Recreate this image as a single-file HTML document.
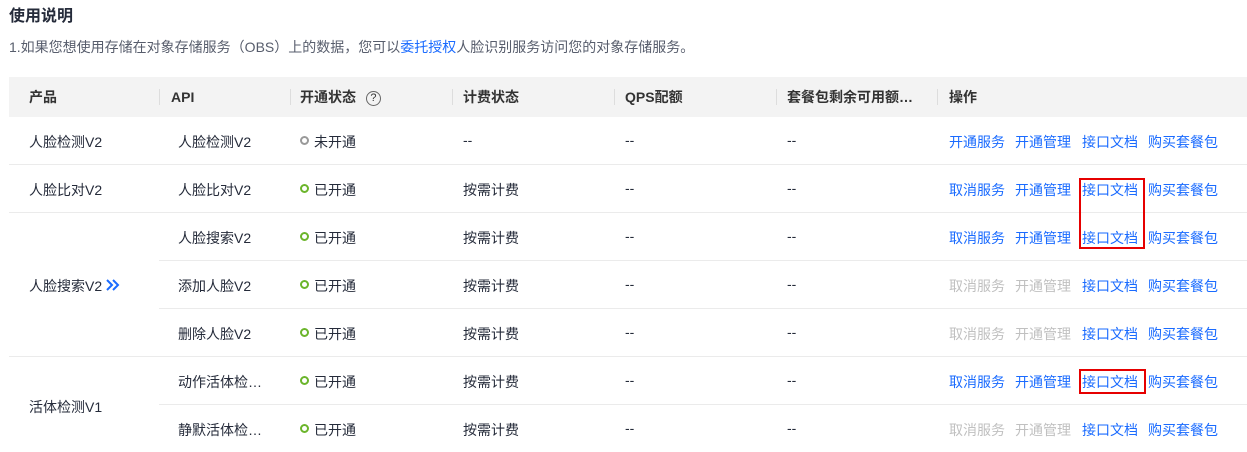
<!DOCTYPE html><html><head><meta charset="utf-8"><style>
body{margin:0;width:1247px;height:452px;background:#fff;font-family:"Liberation Sans","Noto Sans CJK SC",sans-serif;font-size:14px;line-height:20px;color:#252b3a;position:relative;overflow:hidden}
.a{position:absolute;white-space:nowrap;line-height:20px}
.r .a{margin-top:1px}
.h{font-weight:bold;color:#333}
.l{color:#1a6bff}.d{color:#c0c0c0}
.line{position:absolute;height:1px;background:#ebebeb}
.sep{position:absolute;width:1px;height:16px;top:89px;background:#ddd}
.dot{display:inline-block;width:5px;height:5px;border:2px solid #6bb52b;border-radius:50%;margin-right:5px;vertical-align:2px}
.g{border-color:#999}
.rb{position:absolute;border:2px solid #e60000}
.ops{display:flex;gap:10px}
.ops span:nth-child(3){margin-left:1px}
</style></head><body>
<div class="a" style="left:9px;top:7px;font-size:16px;font-weight:bold;color:#252b3a">使用说明</div>
<div class="a" style="left:9px;top:37px;font-size:14px;color:#575d6c">1.如果您想使用存储在对象存储服务（OBS）上的数据，您可以<span class="l">委托授权</span>人脸识别服务访问您的对象存储服务。</div>
<div style="position:absolute;left:9px;top:77px;width:1238px;height:40px;background:#f3f3f3"></div>
<div class="sep" style="left:159px"></div><div class="sep" style="left:290px"></div><div class="sep" style="left:452px"></div><div class="sep" style="left:614px"></div><div class="sep" style="left:776px"></div><div class="sep" style="left:937px"></div>
<div class="a h" style="left:29px;top:87px">产品</div>
<div class="a h" style="left:171px;top:87px">API</div>
<div class="a h" style="left:300px;top:87px">开通状态 <span style="display:inline-block;width:13px;height:13px;border:1px solid #666;border-radius:50%;font-size:11px;line-height:13px;text-align:center;font-weight:normal;margin-left:6px;vertical-align:1px">?</span></div>
<div class="a h" style="left:463px;top:87px">计费状态</div>
<div class="a h" style="left:625px;top:87px">QPS配额</div>
<div class="a h" style="left:787px;top:87px">套餐包剩余可用额…</div>
<div class="a h" style="left:949px;top:87px">操作</div>
<div class="line" style="left:9px;width:1238px;top:164px"></div>
<div class="line" style="left:9px;width:1238px;top:212px"></div>
<div class="line" style="left:159px;width:1088px;top:260px"></div>
<div class="line" style="left:159px;width:1088px;top:308px"></div>
<div class="line" style="left:9px;width:1238px;top:356px"></div>
<div class="line" style="left:159px;width:1088px;top:404px"></div>
<div class="r">
<div class="a" style="left:29px;top:131px">人脸检测V2</div>
<div class="a" style="left:29px;top:179px">人脸比对V2</div>
<div class="a" style="left:29px;top:275px">人脸搜索V2</div>
<div class="a" style="left:29px;top:396px">活体检测V1</div>
<div class="a" style="left:178px;top:131px">人脸检测V2</div>
<div class="a" style="left:178px;top:179px">人脸比对V2</div>
<div class="a" style="left:178px;top:227px">人脸搜索V2</div>
<div class="a" style="left:178px;top:275px">添加人脸V2</div>
<div class="a" style="left:178px;top:323px">删除人脸V2</div>
<div class="a" style="left:178px;top:371px">动作活体检…</div>
<div class="a" style="left:178px;top:419px">静默活体检…</div>
<div class="a" style="left:300px;top:131px"><span class="dot g"></span>未开通</div>
<div class="a" style="left:300px;top:179px"><span class="dot"></span>已开通</div>
<div class="a" style="left:300px;top:227px"><span class="dot"></span>已开通</div>
<div class="a" style="left:300px;top:275px"><span class="dot"></span>已开通</div>
<div class="a" style="left:300px;top:323px"><span class="dot"></span>已开通</div>
<div class="a" style="left:300px;top:371px"><span class="dot"></span>已开通</div>
<div class="a" style="left:300px;top:419px"><span class="dot"></span>已开通</div>
<div class="a" style="left:463px;top:129px">--</div>
<div class="a" style="left:463px;top:179px">按需计费</div><div class="a" style="left:463px;top:227px">按需计费</div><div class="a" style="left:463px;top:275px">按需计费</div><div class="a" style="left:463px;top:323px">按需计费</div><div class="a" style="left:463px;top:371px">按需计费</div><div class="a" style="left:463px;top:419px">按需计费</div>
<div class="a" style="left:625px;top:129px">--</div><div class="a" style="left:625px;top:177px">--</div><div class="a" style="left:625px;top:225px">--</div><div class="a" style="left:625px;top:273px">--</div><div class="a" style="left:625px;top:321px">--</div><div class="a" style="left:625px;top:369px">--</div><div class="a" style="left:625px;top:417px">--</div>
<div class="a" style="left:787px;top:129px">--</div><div class="a" style="left:787px;top:177px">--</div><div class="a" style="left:787px;top:225px">--</div><div class="a" style="left:787px;top:273px">--</div><div class="a" style="left:787px;top:321px">--</div><div class="a" style="left:787px;top:369px">--</div><div class="a" style="left:787px;top:417px">--</div>
<div class="a ops" style="left:949px;top:131px"><span class="l">开通服务</span><span class="l">开通管理</span><span class="l">接口文档</span><span class="l">购买套餐包</span></div>
<div class="a ops" style="left:949px;top:179px"><span class="l">取消服务</span><span class="l">开通管理</span><span class="l">接口文档</span><span class="l">购买套餐包</span></div>
<div class="a ops" style="left:949px;top:227px"><span class="l">取消服务</span><span class="l">开通管理</span><span class="l">接口文档</span><span class="l">购买套餐包</span></div>
<div class="a ops" style="left:949px;top:275px"><span class="d">取消服务</span><span class="d">开通管理</span><span class="l">接口文档</span><span class="l">购买套餐包</span></div>
<div class="a ops" style="left:949px;top:323px"><span class="d">取消服务</span><span class="d">开通管理</span><span class="l">接口文档</span><span class="l">购买套餐包</span></div>
<div class="a ops" style="left:949px;top:371px"><span class="l">取消服务</span><span class="l">开通管理</span><span class="l">接口文档</span><span class="l">购买套餐包</span></div>
<div class="a ops" style="left:949px;top:419px"><span class="d">取消服务</span><span class="d">开通管理</span><span class="l">接口文档</span><span class="l">购买套餐包</span></div>
</div>
<svg style="position:absolute;left:106px;top:279px" width="14" height="12" viewBox="0 0 14 12"><path d="M1 1l5 5-5 5M7 1l5 5-5 5" fill="none" stroke="#1a6bff" stroke-width="2"/></svg>
<div class="rb" style="left:1079px;top:178px;width:62px;height:67px"></div>
<div class="rb" style="left:1079px;top:369px;width:63px;height:21px"></div>
</body></html>
